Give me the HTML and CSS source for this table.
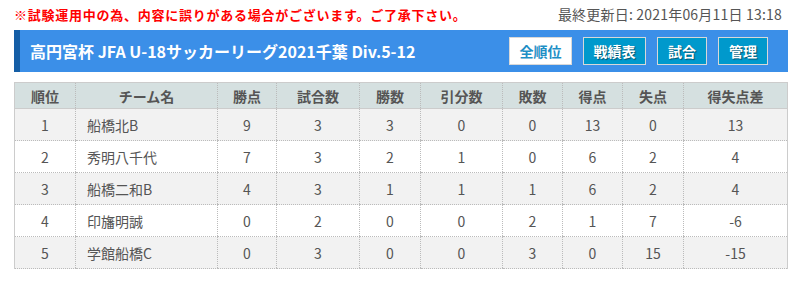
FILE: index.html
```html
<!DOCTYPE html>
<html lang="ja">
<head>
<meta charset="utf-8">
<link rel="stylesheet" href="styles.css">
</head>
<body>
<div class="page">
  <div class="topline">
    <span class="notice">※試験運用中の為、内容に誤りがある場合がございます。ご了承下さい。</span>
    <span class="updated">最終更新日: 2021年06月11日 13:18</span>
  </div>
  <div class="titlebar">
    <h1 class="title">高円宮杯 JFA U-18サッカーリーグ2021千葉 Div.5-12</h1>
    <nav class="btns">
      <a class="btn btn-active w63">全順位</a>
      <a class="btn w63">戦績表</a>
      <a class="btn w50">試合</a>
      <a class="btn w50">管理</a>
    </nav>
  </div>
  <table class="standings">
    <colgroup>
      <col class="c61"><col class="c142"><col class="c59"><col class="c83"><col class="c61">
      <col class="c82"><col class="c60"><col class="c60"><col class="c61"><col class="c104">
    </colgroup>
    <thead>
      <tr><th>順位</th><th>チーム名</th><th>勝点</th><th>試合数</th><th>勝数</th><th>引分数</th><th>敗数</th><th>得点</th><th>失点</th><th>得失点差</th></tr>
    </thead>
    <tbody>
      <tr><td>1</td><td class="team">船橋北B</td><td>9</td><td>3</td><td>3</td><td>0</td><td>0</td><td>13</td><td>0</td><td>13</td></tr>
      <tr><td>2</td><td class="team">秀明八千代</td><td>7</td><td>3</td><td>2</td><td>1</td><td>0</td><td>6</td><td>2</td><td>4</td></tr>
      <tr><td>3</td><td class="team">船橋二和B</td><td>4</td><td>3</td><td>1</td><td>1</td><td>1</td><td>6</td><td>2</td><td>4</td></tr>
      <tr><td>4</td><td class="team">印旛明誠</td><td>0</td><td>2</td><td>0</td><td>0</td><td>2</td><td>1</td><td>7</td><td>-6</td></tr>
      <tr><td>5</td><td class="team">学館船橋C</td><td>0</td><td>3</td><td>0</td><td>0</td><td>3</td><td>0</td><td>15</td><td>-15</td></tr>
    </tbody>
  </table>
</div>
</body>
</html>
```
FILE: styles.css
```css
* { box-sizing: border-box; }
html, body { margin: 0; padding: 0; background: #fff; }
body {
  font-family: "Noto Sans CJK JP", "Noto Sans", sans-serif;
  color: #555;
}
.page {
  width: 774px;
  margin-left: 14px;
}
.topline {
  display: flex;
  justify-content: space-between;
  align-items: center;
  height: 30px;
  padding-bottom: 2px;
}
.notice {
  color: #f00;
  font-weight: bold;
  font-size: 13px;
  letter-spacing: 0.75px;
}
.updated {
  color: #555;
  font-size: 14px;
  letter-spacing: 0.2px;
  margin-right: 6px;
}
.titlebar {
  display: flex;
  align-items: center;
  justify-content: space-between;
  height: 42px;
  background: #3b8fe8;
  border-left: 6px solid #155ea6;
  padding: 0 20px 0 10px;
}
.title {
  margin: 0;
  color: #fff;
  font-size: 16px;
  font-weight: bold;
}
.btns {
  display: flex;
  gap: 11px;
}
.btn {
  display: flex;
  align-items: center;
  justify-content: center;
  height: 28px;
  border: 1px solid #d8d8d8;
  background: #0099cc;
  color: #fff;
  font-size: 14px;
  font-weight: bold;
  text-shadow: 1px 1px 1px rgba(0,0,0,0.45);
}
.btn-active {
  background: #fff;
  color: #1e8fc6;
  text-shadow: none;
}
.w63 { width: 63px; }
.w50 { width: 50px; }
.standings {
  margin-top: 10px;
  width: 773px;
  border-collapse: collapse;
  table-layout: fixed;
  font-size: 14px;
  border-left: 1px solid #ccc;
  border-right: 1px solid #ccc;
}
.c61 { width: 61px; } .c142 { width: 142px; } .c59 { width: 59px; } .c83 { width: 83px; }
.c82 { width: 82px; } .c60 { width: 60px; } .c104 { width: 104px; }
.standings th {
  height: 26px;
  background: #d5e0e0;
  font-size: 14px;
  font-weight: bold;
  color: #555;
  border-top: 1px solid #ccc;
  border-left: 1px dotted #bbb;
  border-bottom: 1px solid #ccc;
  padding: 0;
}
.standings td {
  height: 32px;
  text-align: center;
  color: #555;
  border-left: 1px dotted #bbb;
  border-bottom: 1px dotted #bbb;
  padding: 0;
}
.standings th:first-child, .standings td:first-child { border-left: 1px solid #ccc; }
.standings td.team { text-align: left; padding-left: 11px; }
.standings tbody tr:nth-child(odd) td { background: #f2f2f2; }
```
